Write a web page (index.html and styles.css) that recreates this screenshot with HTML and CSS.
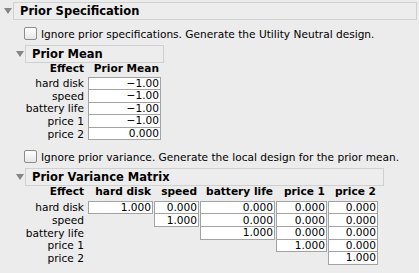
FILE: index.html
```html
<html>
<head>
  <meta charset="UTF-8">
  <title>Prior Specification</title>
  <link rel="stylesheet" href="styles.css">
</head>
<body>

<div class="outline top">
  <div class="outline-head">
    <span class="toggle"></span>
    <div class="title-box wide">Prior Specification</div>
  </div>
  <div class="outline-body">

    <label class="check-row first"><span class="checkbox"></span>Ignore prior specifications. Generate the Utility Neutral design.</label>

    <div class="outline">
      <div class="outline-head">
        <span class="toggle"></span>
        <div class="title-box mean-box">Prior Mean</div>
      </div>
      <table class="grid mean">
        <tr class="head"><th class="lbl">Effect</th><th class="c-mean">Prior Mean</th></tr>
        <tr><td class="lbl">hard disk</td><td class="v top-row">−1.00</td></tr>
        <tr><td class="lbl">speed</td><td class="v">−1.00</td></tr>
        <tr><td class="lbl">battery life</td><td class="v">−1.00</td></tr>
        <tr><td class="lbl">price 1</td><td class="v">−1.00</td></tr>
        <tr><td class="lbl">price 2</td><td class="v">0.000</td></tr>
      </table>
    </div>

    <label class="check-row second"><span class="checkbox"></span>Ignore prior variance. Generate the local design for the prior mean.</label>

    <div class="outline">
      <div class="outline-head">
        <span class="toggle"></span>
        <div class="title-box var-box">Prior Variance Matrix</div>
      </div>
      <table class="grid matrix">
        <tr class="head">
          <th class="lbl">Effect</th>
          <th class="c-hd">hard disk</th>
          <th class="c-sp">speed</th>
          <th class="c-bl">battery life</th>
          <th class="c-p1">price 1</th>
          <th class="c-p2">price 2</th>
        </tr>
        <tr>
          <td class="lbl">hard disk</td>
          <td class="v top-row">1.000</td>
          <td class="v top-row">0.000</td>
          <td class="v top-row">0.000</td>
          <td class="v top-row">0.000</td>
          <td class="v top-row">0.000</td>
        </tr>
        <tr>
          <td class="lbl">speed</td>
          <td></td>
          <td class="v">1.000</td>
          <td class="v">0.000</td>
          <td class="v">0.000</td>
          <td class="v">0.000</td>
        </tr>
        <tr>
          <td class="lbl">battery life</td>
          <td></td>
          <td></td>
          <td class="v">1.000</td>
          <td class="v">0.000</td>
          <td class="v">0.000</td>
        </tr>
        <tr>
          <td class="lbl">price 1</td>
          <td></td>
          <td></td>
          <td></td>
          <td class="v">1.000</td>
          <td class="v">0.000</td>
        </tr>
        <tr>
          <td class="lbl">price 2</td>
          <td></td>
          <td></td>
          <td></td>
          <td></td>
          <td class="v">1.000</td>
        </tr>
      </table>
    </div>

  </div>
</div>

</body>
</html>
```

FILE: styles.css
```css
body{margin:0; background:#ececec; color:#000; font-family:"DejaVu Sans",sans-serif; font-size:10.6px;}

/* outline boxes */
.outline-head{display:flex; align-items:flex-start; height:18px;}
.toggle{width:0; height:0; border-left:4px solid transparent; border-right:4px solid transparent; border-top:6px solid #858585; margin-top:6px;}
.title-box{box-sizing:border-box; height:18px; border:1px solid #d0d0d0; background:#ededed; font-weight:bold; font-size:11.5px; line-height:16px; padding-left:6px; white-space:nowrap;}

.top{padding-top:2px;}
.top > .outline-head .toggle{margin-left:4px; margin-right:1px;}
.wide{width:404px;}
.outline-body{padding-left:16px;}
.outline-body .toggle{margin-right:1px;}
.mean-box{width:139px;}
.var-box{width:359px;}

/* checkbox rows */
.check-row{display:flex; align-items:center; height:13px; white-space:nowrap;}
.check-row.first{margin-top:7px; margin-bottom:5px;}
.check-row.second{margin-top:10px; margin-bottom:5px;}
.checkbox{box-sizing:border-box; width:13px; height:13px; margin-left:8px; margin-right:4px; border:1px solid #8c8c8c; border-radius:2px; background:linear-gradient(#ffffff,#e6e6e6);}

/* tables */
.grid{border-collapse:separate; border-spacing:1px 0; margin-left:6px; font-size:inherit; font-family:inherit;}
.grid th, .grid td{padding:0; text-align:right; white-space:nowrap; line-height:11px;}
.grid th{font-weight:bold; padding-right:2px; vertical-align:bottom;}
.grid .lbl{width:61px; padding-right:3px; font-weight:normal;}
.grid .head .lbl{font-weight:bold;}
.mean .head th{height:12px; padding-bottom:3px;}
.matrix .head th{height:12px; padding-bottom:4px;}
.grid td{height:12.6px;}
.grid .v{box-sizing:border-box; background:#fff; border:1px solid #a3a3a3; border-top:none; padding-right:1px;}
.grid .v.top-row{border-top:1px solid #a3a3a3;}

.c-mean{width:71px;}
.c-hd{width:63px;}
.c-sp{width:43px;}
.c-bl{width:73px;}
.c-p1{width:49px;}
.c-p2{width:48px;}
```
